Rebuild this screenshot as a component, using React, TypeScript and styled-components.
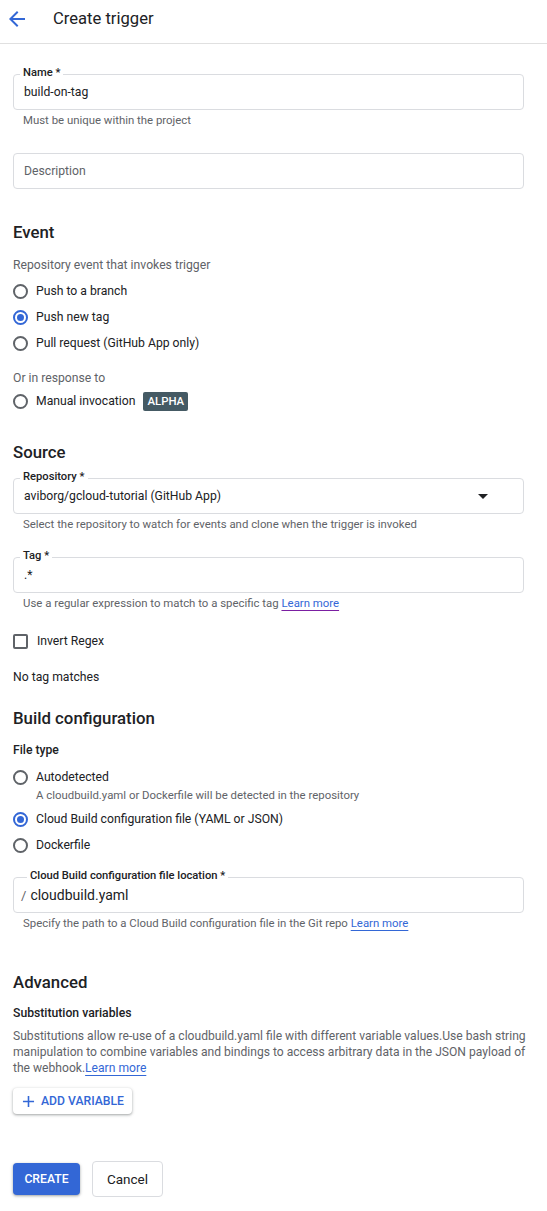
import React from "react";
import styled, { createGlobalStyle } from "styled-components";

const Global = createGlobalStyle`
  html, body { margin: 0; padding: 0; background: #fff; }
  body { font-family: Roboto, "Noto Sans", Arial, sans-serif; color: #202124; -webkit-font-smoothing: antialiased; }
  * { box-sizing: border-box; }
`;

const BLUE = "#3367d6";

const Page = styled.div`
  width: 547px;
  min-height: 1211px;
  background: #fff;
`;

const Header = styled.header`
  height: 44px;
  border-bottom: 1px solid #e0e0e0;
  display: flex;
  align-items: center;
  padding-left: 5px;
  padding-bottom: 5px;
`;

const BackButton = styled.span`
  width: 24px;
  height: 24px;
  display: flex;
  color: ${BLUE};
  margin-right: 24px;
`;

const Title = styled.h1`
  margin: 0;
  font-size: 16.6px;
  font-weight: 400;
  line-height: 24px;
  color: #202124;
`;

const Main = styled.main`
  padding: 0 23px 20px 13px;
  display: flex;
  flex-direction: column;
`;

const Spacer = styled.div<{ $h: number }>`
  height: ${(p) => p.$h}px;
  flex: none;
`;

const FieldBox = styled.div`
  position: relative;
  height: 36px;
  border: 1px solid #dadce0;
  border-radius: 4px;
  display: flex;
  align-items: center;
  padding: 0 10px;
`;

const FieldLabel = styled.span<{ $left?: number }>`
  position: absolute;
  top: -9px;
  left: ${(p) => p.$left ?? 6}px;
  padding: 0 3px;
  background: #fff;
  font-size: 11.2px;
  line-height: 14px;
  font-weight: 500;
  color: #202124;
`;

const Value = styled.span<{ $size?: number }>`
  font-size: ${(p) => p.$size ?? 12.2}px;
  line-height: 20px;
  color: #202124;
  flex: 1;
  white-space: nowrap;
`;

const Placeholder = styled.span`
  font-size: 12.2px;
  line-height: 20px;
  color: #5f6368;
`;

const Prefix = styled.span`
  font-size: 13px;
  color: #5f6368;
  margin-left: -3px;
  margin-right: 4px;
`;

const Caret = styled.span`
  width: 0;
  height: 0;
  border-left: 5px solid transparent;
  border-right: 5px solid transparent;
  border-top: 5px solid #202124;
  margin-right: 25px;
`;

const Helper = styled.div`
  padding-left: 10px;
  font-size: 11.4px;
  line-height: 16px;
  color: #5f6368;
  white-space: nowrap;
`;

const Link = styled.a<{ $line: string }>`
  color: ${BLUE};
  text-decoration: underline;
  text-decoration-color: ${(p) => p.$line};
  text-underline-offset: 3px;
  cursor: pointer;
`;

const Heading = styled.h2`
  margin: 0;
  font-size: 16.8px;
  font-weight: 500;
  line-height: 24px;
  color: #202124;
`;

const Hint = styled.div<{ $lh?: number }>`
  font-size: 12.2px;
  line-height: ${(p) => p.$lh ?? 20}px;
  color: #5f6368;
`;

const Plain = styled.div`
  font-size: 12.2px;
  line-height: 20px;
  color: #202124;
`;

const SubLabel = styled.div`
  font-size: 12.2px;
  line-height: 20px;
  font-weight: 500;
  color: #202124;
`;

const OptionRow = styled.label`
  height: 26px;
  padding-top: 2px;
  display: flex;
  align-items: center;
  gap: 8px;
  font-size: 12.2px;
  color: #202124;
`;

const RadioCircle = styled.span<{ $checked?: boolean }>`
  width: 15px;
  height: 15px;
  border-radius: 50%;
  border: 2px solid ${(p) => (p.$checked ? BLUE : "#5f6368")};
  display: flex;
  align-items: center;
  justify-content: center;
  flex: none;
  &::after {
    content: "";
    width: 7px;
    height: 7px;
    border-radius: 50%;
    background: ${(p) => (p.$checked ? BLUE : "transparent")};
  }
`;

const CheckBox = styled.span`
  width: 15px;
  height: 15px;
  border: 2px solid #5f6368;
  border-radius: 2px;
  flex: none;
  margin-right: 1px;
`;

const OptionHint = styled.div`
  padding-left: 23px;
  margin-top: -1px;
  font-size: 11.4px;
  line-height: 14px;
  color: #5f6368;
`;

const Badge = styled.span`
  background: #455a64;
  color: #fff;
  font-size: 11.4px;
  font-weight: 500;
  line-height: 19px;
  padding: 0 4px;
  border-radius: 2px;
`;

const Paragraph = styled.p`
  margin: 0;
  font-size: 12.1px;
  line-height: 16px;
  color: #5f6368;
  margin-right: -10px;
`;

const AddButton = styled.button`
  align-self: flex-start;
  height: 26px;
  display: flex;
  align-items: center;
  gap: 3px;
  padding: 0 8px 0 6px;
  border: none;
  border-radius: 4px;
  background: #fff;
  color: ${BLUE};
  font-family: inherit;
  font-size: 12.2px;
  font-weight: 500;
  box-shadow: 0 1px 2px rgba(60, 64, 67, 0.3), 0 1px 3px 1px rgba(60, 64, 67, 0.15);
`;

const Actions = styled.div`
  display: flex;
  align-items: center;
  gap: 12px;
`;

const PrimaryButton = styled.button`
  height: 32px;
  width: 67px;
  border: none;
  border-radius: 4px;
  background: ${BLUE};
  color: #fff;
  font-family: inherit;
  font-size: 12.2px;
  font-weight: 500;
  box-shadow: 0 1px 2px rgba(60, 64, 67, 0.3), 0 1px 3px 1px rgba(60, 64, 67, 0.15);
`;

const SecondaryButton = styled.button`
  height: 36px;
  width: 71px;
  border: 1px solid #dadce0;
  border-radius: 4px;
  background: #fff;
  color: #202124;
  font-family: inherit;
  font-size: 13.5px;
  font-weight: 400;
`;

const ArrowBack = () => (
  <svg width="24" height="24" viewBox="0 0 24 24" fill="currentColor">
    <path d="M20 11H7.83l5.59-5.59L12 4l-8 8 8 8 1.41-1.41L7.83 13H20v-2z" />
  </svg>
);

const PlusIcon = () => (
  <svg width="19" height="19" viewBox="0 0 24 24" fill="currentColor">
    <path d="M19 13h-6v6h-2v-6H5v-2h6V5h2v6h6v2z" />
  </svg>
);

const Radio = ({ label, checked, children }: { label: string; checked?: boolean; children?: React.ReactNode }) => (
  <OptionRow>
    <RadioCircle $checked={checked} />
    {label}
    {children}
  </OptionRow>
);

export default function App() {
  return (
    <Page>
      <Global />
      <Header>
        <BackButton>
          <ArrowBack />
        </BackButton>
        <Title>Create trigger</Title>
      </Header>
      <Main>
        <Spacer $h={30} />
        <FieldBox>
          <FieldLabel>Name *</FieldLabel>
          <Value>build-on-tag</Value>
        </FieldBox>
        <Spacer $h={2} />
        <Helper>Must be unique within the project</Helper>
        <Spacer $h={25} />
        <FieldBox>
          <Placeholder>Description</Placeholder>
        </FieldBox>

        <Spacer $h={31} />
        <Heading>Event</Heading>
        <Spacer $h={11} />
        <Hint>Repository event that invokes trigger</Hint>
        <Spacer $h={2} />
        <Radio label="Push to a branch" />
        <Radio label="Push new tag" checked />
        <Radio label="Pull request (GitHub App only)" />
        <Spacer $h={14} />
        <Hint $lh={18}>Or in response to</Hint>
        <Radio label="Manual invocation">
          <Badge>ALPHA</Badge>
        </Radio>

        <Spacer $h={27} />
        <Heading>Source</Heading>
        <Spacer $h={14} />
        <FieldBox>
          <FieldLabel>Repository *</FieldLabel>
          <Value>aviborg/gcloud-tutorial (GitHub App)</Value>
          <Caret />
        </FieldBox>
        <Spacer $h={2} />
        <Helper>Select the repository to watch for events and clone when the trigger is invoked</Helper>
        <Spacer $h={25} />
        <FieldBox>
          <FieldLabel>Tag *</FieldLabel>
          <Value>.*</Value>
        </FieldBox>
        <Spacer $h={2} />
        <Helper>
          Use a regular expression to match to a specific tag <Link $line="#7b1fa2">Learn more</Link>
        </Helper>
        <Spacer $h={16} />
        <OptionRow>
          <CheckBox />
          Invert Regex
        </OptionRow>
        <Spacer $h={14} />
        <Plain>No tag matches</Plain>

        <Spacer $h={19} />
        <Heading>Build configuration</Heading>
        <Spacer $h={10} />
        <SubLabel>File type</SubLabel>
        <Spacer $h={3} />
        <Radio label="Autodetected" />
        <OptionHint>A cloudbuild.yaml or Dockerfile will be detected in the repository</OptionHint>
        <Spacer $h={3} />
        <Radio label="Cloud Build configuration file (YAML or JSON)" checked />
        <Radio label="Dockerfile" />
        <Spacer $h={20} />
        <FieldBox>
          <FieldLabel $left={13}>Cloud Build configuration file location *</FieldLabel>
          <Prefix>/</Prefix>
          <Value $size={14}>cloudbuild.yaml</Value>
        </FieldBox>
        <Spacer $h={2} />
        <Helper>
          Specify the path to a Cloud Build configuration file in the Git repo <Link $line={BLUE}>Learn more</Link>
        </Helper>

        <Spacer $h={39} />
        <Heading>Advanced</Heading>
        <Spacer $h={9} />
        <SubLabel>Substitution variables</SubLabel>
        <Spacer $h={5} />
        <Paragraph>
          Substitutions allow re-use of a cloudbuild.yaml file with different variable values.Use bash string
          manipulation to combine variables and bindings to access arbitrary data in the JSON payload of the
          webhook.<Link $line={BLUE}>Learn more</Link>
        </Paragraph>
        <Spacer $h={12} />
        <AddButton>
          <PlusIcon />
          ADD VARIABLE
        </AddButton>
        <Spacer $h={47} />
        <Actions>
          <PrimaryButton>CREATE</PrimaryButton>
          <SecondaryButton>Cancel</SecondaryButton>
        </Actions>
      </Main>
    </Page>
  );
}
